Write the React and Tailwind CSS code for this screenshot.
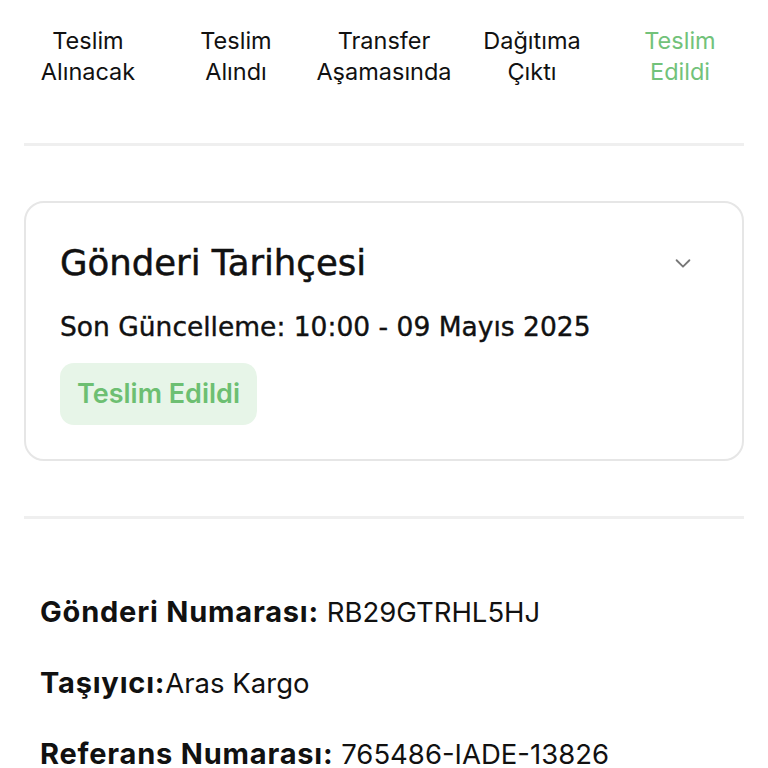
import React from 'react';

const steps = [
  ['Teslim', 'Alınacak'],
  ['Teslim', 'Alındı'],
  ['Transfer', 'Aşamasında'],
  ['Dağıtıma', 'Çıktı'],
  ['Teslim', 'Edildi'],
];

function App() {
  return (
    <div className="min-h-screen bg-white font-['Inter',sans-serif] text-[#111]">
      {/* adımlar */}
      <div className="grid grid-cols-5 px-[14px] pt-[25px] pb-[56px]">
        {steps.map((s, i) => (
          <div
            key={i}
            className={`text-center text-[23.5px] leading-[31px] ${i === steps.length - 1 ? 'text-[#72c27a]' : 'text-[#111]'}`}
          >
            <div>{s[0]}</div>
            <div>{s[1]}</div>
          </div>
        ))}
      </div>

      <div className="mx-[24px] h-[3px] bg-[#efefef]" />

      {/* gönderi tarihçesi */}
      <div className="mx-[24px] mt-[55px] rounded-[20px] border-2 border-[#e6e6e6] px-[34px] pt-[35px] pb-[34px] font-['DejaVu_Sans',sans-serif]">
        <div className="flex items-center justify-between">
          <h2 className="text-[35.5px] leading-[50px] [-webkit-text-stroke:0.5px_#111]">Gönderi Tarihçesi</h2>
          <svg width="22" height="22" viewBox="0 0 24 24" fill="none" stroke="#777" strokeWidth="2" strokeLinecap="round" strokeLinejoin="round" className="mr-[14px]">
            <path d="M5 9l7 7 7-7" />
          </svg>
        </div>
        <p className="mt-[24px] text-[26.5px] leading-[30px] [-webkit-text-stroke:0.4px_#111]">Son Güncelleme: 10:00 - 09 Mayıs 2025</p>
        <div className="mt-[21px] inline-flex h-[62px] items-center rounded-[14px] bg-[#e7f5e8] px-[17px] font-['Inter',sans-serif] text-[27px] font-semibold text-[#6dbf72]">
          Teslim Edildi
        </div>
      </div>

      <div className="mx-[24px] mt-[55px] h-[3px] bg-[#efefef]" />

      {/* bilgiler */}
      <div className="px-[40px] pt-[75px] flex flex-col gap-[35px] text-[27.5px] leading-[35px]">
        <p><span className="font-bold text-[29px] leading-[35px] tracking-[0.8px]">Gönderi Numarası:</span> RB29GTRHL5HJ</p>
        <p><span className="font-bold text-[29px] leading-[35px] tracking-[0.8px]">Taşıyıcı:</span>Aras Kargo</p>
        <p><span className="font-bold text-[29px] leading-[35px] tracking-[0.8px]">Referans Numarası:</span> 765486-IADE-13826</p>
      </div>
    </div>
  );
}

export default App;
